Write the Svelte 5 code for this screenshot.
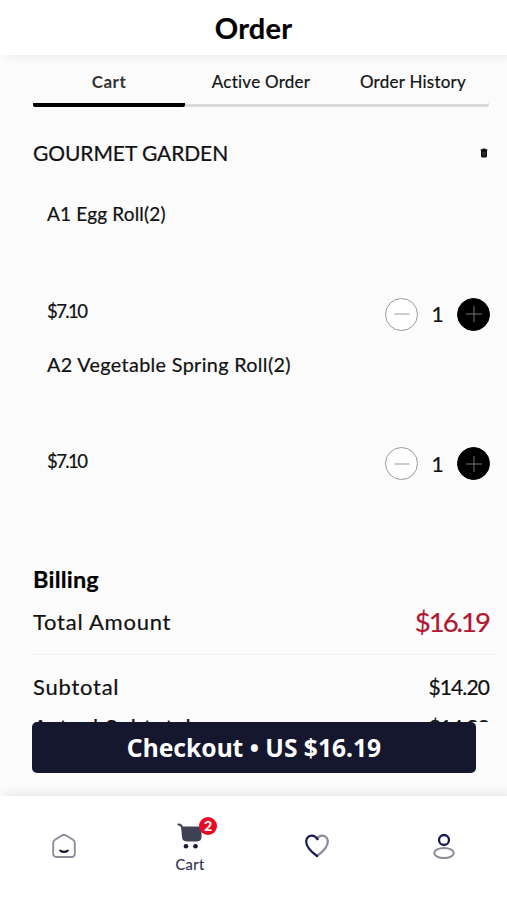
<script>
  const tabs = ["Cart", "Active Order", "Order History"];
  let activeTab = 0;

  let items = [
    { name: "A1 Egg Roll(2)", price: 7.1, count: 1, tracking: 0.18 },
    { name: "A2 Vegetable Spring Roll(2)", price: 7.1, count: 1, tracking: 0.35 },
  ];

  const total = "$16.19";
  const rows = [
    { label: "Subtotal", value: "$14.20" },
    { label: "Actual Subtotal", value: "$14.20" },
  ];

  function change(item, step) {
    item.count = Math.max(0, item.count + step);
    items = items;
  }
</script>

<div class="screen">
  <header class="header"><h1>Order</h1></header>

  <main class="content">
    <nav class="tabs">
      {#each tabs as tab, i}
        <button
          class="tab{i === activeTab ? ' is-active' : ''}"
          on:click={() => (activeTab = i)}
        >
          <span>{tab}</span>
        </button>
      {/each}
    </nav>

    <div class="shop">
      <span class="shop-name">GOURMET GARDEN</span>
      <svg class="trash" width="8" height="10" viewBox="0 0 8 10">
        <path d="M2.6 1.2V.5h2.8v.7H7.3v1.6H7V8q0 1.5-1.5 1.5h-3Q1 9.500 1 8V2.800H.7V1.200z" fill="#111" />
        <path d="M3 4v3.500M5 4v3.500" stroke="#666" stroke-width=".6" />
      </svg>
    </div>

    {#each items as item, i}
      <div class="item">
        <div class="item-name{i > 0 ? ' is-wide' : ''}" style="letter-spacing: {item.tracking}px">{item.name}</div>
        <div class="item-foot">
          <span class="item-price">${item.price.toFixed(2)}</span>
          <div class="stepper">
            <button class="round" aria-label="Remove one" on:click={() => change(item, -1)}>
              <svg width="16" height="16" viewBox="0 0 16 16">
                <path d="M.5 8h15" stroke="#999" />
              </svg>
            </button>
            <span class="count">{item.count}</span>
            <button class="round is-dark" aria-label="Add one" on:click={() => change(item, 1)}>
              <svg width="16" height="16" viewBox="0 0 16 16">
                <path d="M0 8h16M8 0v16" stroke="#777" />
              </svg>
            </button>
          </div>
        </div>
      </div>
    {/each}

    <section class="billing">
      <h2>Billing</h2>
      <div class="row total">
        <span>Total Amount</span>
        <span class="amount">{total}</span>
      </div>
      {#each rows as row}
        <div class="row">
          <span>{row.label}</span>
          <span class="value">{row.value}</span>
        </div>
      {/each}
    </section>
  </main>

  <div class="checkout-bar">
    <button class="checkout"><span>Checkout • US {total}</span></button>
  </div>

  <footer class="navbar">
    <div class="nav-item">
      <svg class="home" width="26" height="26" viewBox="0 0 26 26" fill="none" stroke-linecap="round">
        <path d="M11.200 2.300Q13 1.300 14.800 2.300L22 6.800Q23.800 8 23.800 10V20.500Q23.800 24 20.300 24H5.700Q2.200 24 2.200 20.500V10Q2.200 8 4 6.800Z" stroke="#8b8b9b" stroke-width="1.900" />
        <path d="M9.300 17.600Q13 20.300 16.700 17.600" stroke="#171936" stroke-width="2.200" />
      </svg>
    </div>
    <div class="nav-item is-active">
      <div class="cart-icon">
        <svg width="26" height="26" viewBox="0 0 26 26">
          <path d="M1.400 1.600Q4.400 1.500 5 4.500" fill="none" stroke="#3d4255" stroke-width="2" stroke-linecap="round" />
          <path d="M4 3.500H24.500V14Q24.500 18.400 20.200 18.400H9.600Q5.300 18.400 5 14Z" fill="#3d4255" />
          <circle cx="9" cy="23.300" r="2.300" fill="#171936" />
          <circle cx="18.500" cy="23.300" r="2.300" fill="#171936" />
        </svg>
        <span class="badge">2</span>
      </div>
      <span class="nav-label">Cart</span>
    </div>
    <div class="nav-item">
      <svg width="26" height="24" viewBox="0 0 26 24" fill="none" stroke-width="2.200" stroke-linecap="round" stroke-linejoin="round">
        <path d="M13 5C15.500 .8 20.500 .6 22.900 4.200C26.500 11 18.500 18 13 22" stroke="#8b8b9b" />
        <path d="M13.500 5.200C10.500 .8 5.500 .6 3.100 4.200C-.5 11 7.500 18 13 22" stroke="#171956" />
      </svg>
    </div>
    <div class="nav-item">
      <svg width="24" height="28" viewBox="0 0 24 28" fill="none">
        <circle cx="12" cy="8" r="5" stroke="#171956" stroke-width="2.300" />
        <ellipse cx="12" cy="21" rx="9.700" ry="5" stroke="#8b8b9b" stroke-width="1.900" />
      </svg>
    </div>
  </footer>
</div>

<style>
  :global(body) {
    margin: 0;
    background: #fbfbfb;
  }

  * {
    box-sizing: border-box;
  }

  button {
    padding: 0;
    border: 0;
    background: none;
    font: inherit;
    color: inherit;
    cursor: pointer;
  }

  svg {
    display: block;
  }

  .screen {
    display: flex;
    flex-direction: column;
    width: 507px;
    height: 900px;
    overflow: hidden;
    font-family: Lato, "Noto Sans", sans-serif;
    color: #111;
    background: #fbfbfb;
    -webkit-text-stroke: 0.2px;
  }

  .header {
    display: flex;
    flex: none;
    align-items: center;
    justify-content: center;
    height: 55px;
    background: #fff;
    box-shadow: 6px 2px 8px rgba(0, 0, 0, 0.06);
    z-index: 1;
  }

  h1 {
    margin: 0;
    padding-bottom: 1px;
    font-size: 29px;
    line-height: 53px;
    font-weight: 700;
    letter-spacing: 0.2px;
    color: #000;
  }

  .content {
    flex: none;
    height: 667px;
    padding: 10px 18px 0 33px;
    overflow: hidden;
  }

  .tabs {
    display: flex;
    width: 456px;
    height: 42px;
    border-radius: 2px;
    box-shadow: inset 0 -3px #dbdbdb;
  }

  .tab {
    display: flex;
    flex: 1;
    justify-content: center;
    font-size: 17px;
    line-height: 33px;
    letter-spacing: 0.25px;
  }

  .tab.is-active {
    font-weight: 700;
    color: #333;
    border-bottom: 4px solid #000;
    border-radius: 2px;
    letter-spacing: 0.5px;
    -webkit-text-stroke: 0;
  }

  .shop {
    display: flex;
    align-items: center;
    justify-content: space-between;
    height: 30px;
    margin-top: 31px;
  }

  .shop-name {
    padding-bottom: 2px;
    font-size: 21px;
    letter-spacing: -0.08px;
  }

  .trash {
    margin-right: 1px;
  }

  .item {
    height: 149.5px;
    padding-left: 14px;
  }

  .shop + .item {
    margin-top: 31px;
  }

  .item-name {
    height: 30px;
    font-size: 19px;
    line-height: 30px;
    white-space: nowrap;
  }

  .item-name.is-wide {
    font-size: 19.8px;
  }

  .item-foot {
    display: flex;
    align-items: center;
    justify-content: space-between;
    height: 34px;
    margin-top: 68px;
  }

  .item-price {
    margin-top: -6px;
    font-size: 18.5px;
    letter-spacing: -1.6px;
  }

  .stepper {
    display: flex;
    align-items: center;
    justify-content: space-between;
    width: 105px;
    margin-right: -1px;
  }

  .round {
    display: flex;
    align-items: center;
    justify-content: center;
    width: 33px;
    height: 33px;
    border: 1px solid #999;
    border-radius: 50%;
    background: #fff;
  }

  .round.is-dark {
    border-color: #000;
    background: #000;
  }

  .count {
    font-size: 21px;
    line-height: 30px;
  }

  .billing {
    margin-top: 66px;
  }

  h2 {
    margin: 0;
    font-size: 23.5px;
    line-height: 30px;
    font-weight: 700;
    letter-spacing: 0.2px;
    color: #000;
  }

  .row {
    display: flex;
    align-items: center;
    justify-content: space-between;
    height: 40px;
    font-size: 22px;
    letter-spacing: 0.75px;
  }

  .row.total {
    height: 61px;
    margin: 0 -7px 11px 0;
    padding: 0 7px 5px 0;
    border-bottom: 1px solid #f1f1f1;
  }

  .amount {
    font-size: 27.5px;
    letter-spacing: -2px;
    color: #ae1830;
  }

  .value {
    font-size: 21px;
    letter-spacing: -0.9px;
  }

  .checkout-bar {
    flex: none;
    height: 74px;
    padding: 0 31px 0 32px;
  }

  .checkout {
    width: 100%;
    height: 51px;
    border-radius: 5px;
    background: #15172e;
    color: #fff;
    font-family: "Noto Sans", sans-serif;
    font-size: 24.6px;
    line-height: 51px;
    font-weight: 700;
    -webkit-text-stroke: 0;
  }

  .navbar {
    display: grid;
    grid-template-columns: repeat(4, 1fr);
    flex: none;
    height: 104px;
    padding-bottom: 4px;
    background: #fff;
    box-shadow: 4px -3px 8px rgba(0, 0, 0, 0.08);
    z-index: 1;
  }

  .nav-item {
    display: flex;
    flex-direction: column;
    align-items: center;
    justify-content: center;
  }

  .nav-item.is-active {
    padding-top: 5px;
  }

  .home {
    margin-left: 2px;
  }

  .cart-icon {
    position: relative;
  }

  .badge {
    position: absolute;
    top: -6px;
    left: 22px;
    width: 18px;
    height: 18px;
    border-radius: 50%;
    background: #ed0826;
    color: #fff;
    font-size: 14px;
    font-weight: 700;
    line-height: 18px;
    text-align: center;
  }

  .nav-label {
    margin-top: 6px;
    font-size: 14.5px;
    line-height: 20px;
    letter-spacing: 0.5px;
    color: #303152;
  }
</style>
